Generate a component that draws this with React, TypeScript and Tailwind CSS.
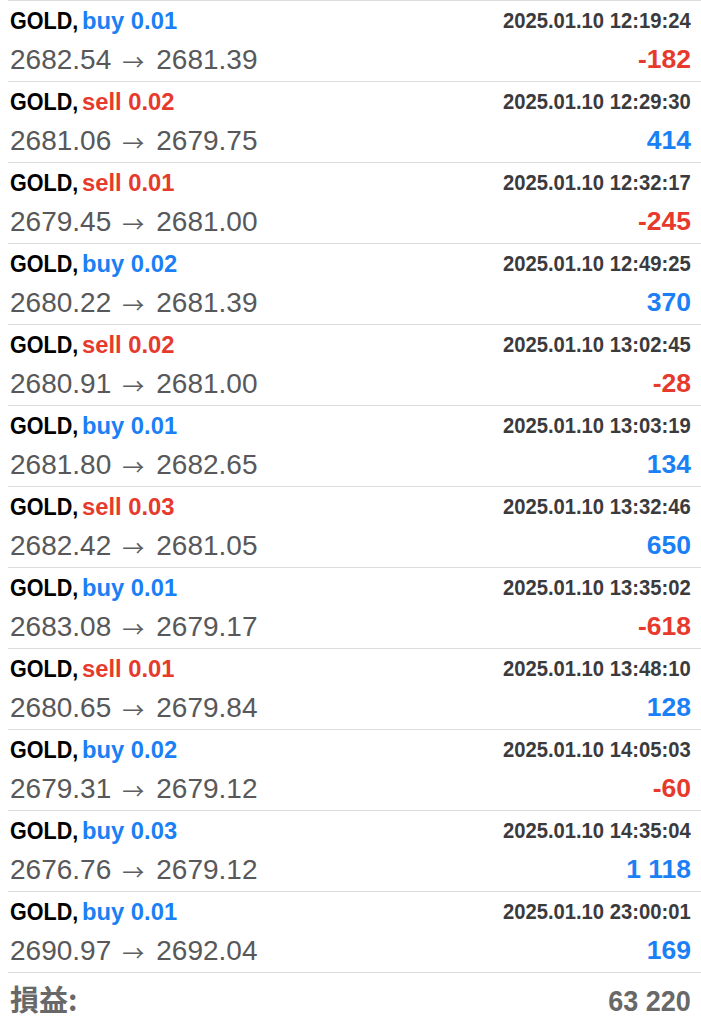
import React from "react";

type Trade = { side: "buy" | "sell"; vol: string; open: string; close: string; time: string; profit: string };

const trades: Trade[] = [
  { side: "buy", vol: "0.01", open: "2682.54", close: "2681.39", time: "2025.01.10 12:19:24", profit: "-182" },
  { side: "sell", vol: "0.02", open: "2681.06", close: "2679.75", time: "2025.01.10 12:29:30", profit: "414" },
  { side: "sell", vol: "0.01", open: "2679.45", close: "2681.00", time: "2025.01.10 12:32:17", profit: "-245" },
  { side: "buy", vol: "0.02", open: "2680.22", close: "2681.39", time: "2025.01.10 12:49:25", profit: "370" },
  { side: "sell", vol: "0.02", open: "2680.91", close: "2681.00", time: "2025.01.10 13:02:45", profit: "-28" },
  { side: "buy", vol: "0.01", open: "2681.80", close: "2682.65", time: "2025.01.10 13:03:19", profit: "134" },
  { side: "sell", vol: "0.03", open: "2682.42", close: "2681.05", time: "2025.01.10 13:32:46", profit: "650" },
  { side: "buy", vol: "0.01", open: "2683.08", close: "2679.17", time: "2025.01.10 13:35:02", profit: "-618" },
  { side: "sell", vol: "0.01", open: "2680.65", close: "2679.84", time: "2025.01.10 13:48:10", profit: "128" },
  { side: "buy", vol: "0.02", open: "2679.31", close: "2679.12", time: "2025.01.10 14:05:03", profit: "-60" },
  { side: "buy", vol: "0.03", open: "2676.76", close: "2679.12", time: "2025.01.10 14:35:04", profit: "1 118" },
  { side: "buy", vol: "0.01", open: "2690.97", close: "2692.04", time: "2025.01.10 23:00:01", profit: "169" },
];

const sans = "[font-family:'Liberation_Sans',Arial,sans-serif]";

export default function App() {
  return (
    <div className={`w-[701px] h-[1024px] bg-white overflow-hidden ${sans}`}>
      {trades.map((t, i) => (
        <div key={i} className="pl-[8px]">
          <div className="h-[81px] border-t border-[#dcdcdc] pl-[2px] pr-[10px] flex flex-col">
            <div className="flex justify-between items-center h-[40px]">
              <div className="flex items-center font-bold text-[24.5px] leading-none">
                <span className="inline-block w-[72px] whitespace-nowrap origin-left scale-x-[0.88] text-black">GOLD,</span>
                <span
                  className={`inline-block whitespace-nowrap origin-left scale-x-[0.97] ${
                    t.side === "buy" ? "text-[#1b7ff5]" : "text-[#e63a2c]"
                  }`}
                >
                  {t.side} {t.vol}
                </span>
              </div>
              <div className="pt-[1px] font-bold text-[21.4px] leading-none text-[#3b3b3d]">
                <span className="inline-block whitespace-nowrap origin-right scale-x-[0.945]">{t.time}</span>
              </div>
            </div>
            <div className="flex justify-between items-center h-[34px]">
              <div className="pt-[3px] flex items-center text-[28px] leading-none text-[#58585a] whitespace-nowrap">
                <span>{t.open}</span>
                <span className="ml-[11px] mr-[12px] pt-[1px] [font-family:'Noto_Sans_CJK_JP',sans-serif] text-[22px] leading-none text-[#5e5e60]">
                  →
                </span>
                <span>{t.close}</span>
              </div>
              <div
                className={`pt-[3px] font-bold text-[26.5px] leading-none whitespace-nowrap ${
                  t.profit.startsWith("-") ? "text-[#e63a2c]" : "text-[#1b7ff5]"
                }`}
              >
                {t.profit}
              </div>
            </div>
          </div>
        </div>
      ))}
      <div className="pl-[8px]">
        <div className="h-[52px] border-t border-[#dcdcdc] pl-[2px] pr-[10px] flex justify-between items-center">
          <div className="[font-family:'Noto_Sans_CJK_JP',sans-serif] font-bold text-[29px] text-[#686868] leading-none">
            損益:
          </div>
          <div className="pt-[5px] font-bold text-[30px] leading-none text-[#686868]">
            <span className="inline-block whitespace-nowrap origin-right scale-x-[0.9]">63 220</span>
          </div>
        </div>
      </div>
    </div>
  );
}
